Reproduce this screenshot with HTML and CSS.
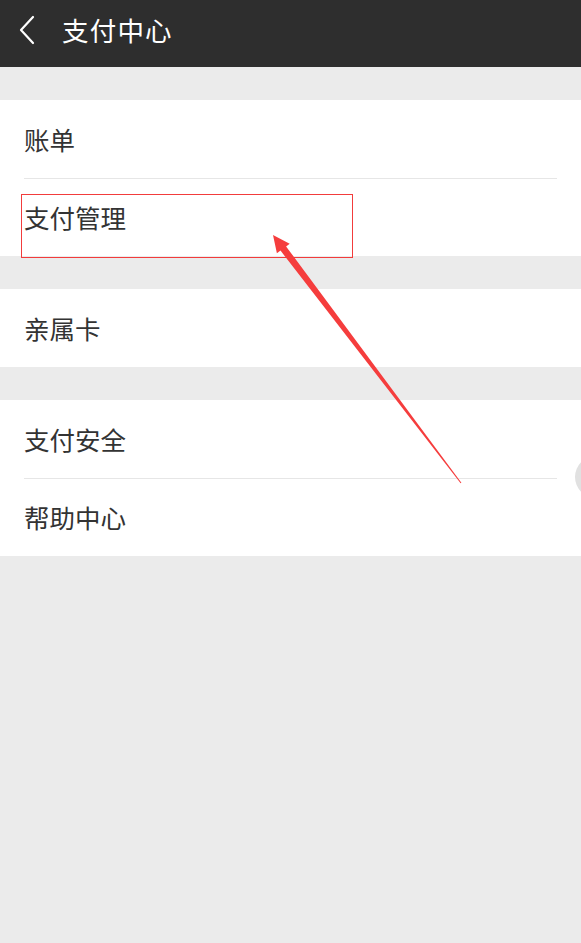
FILE: index.html
```html
<!DOCTYPE html>
<html lang="zh-CN">
<head>
<meta charset="utf-8">
<title>支付中心</title>
<link rel="stylesheet" href="styles.css">
</head>
<body>
<div class="page">
  <header class="topbar">
    <svg class="back" width="20" height="30" viewBox="0 0 20 30">
      <polyline points="15,2 3,15 15,28" fill="none" stroke="#ffffff" stroke-width="2.2" stroke-linecap="round" stroke-linejoin="round"/>
    </svg>
    <h1 class="title">支付中心</h1>
  </header>
  <main class="content">
    <section class="group">
      <div class="row">账单</div>
      <div class="row">支付管理</div>
    </section>
    <section class="group">
      <div class="row">亲属卡</div>
    </section>
    <section class="group">
      <div class="row">支付安全</div>
      <div class="row">帮助中心</div>
    </section>
  </main>
  <svg class="annot" width="581" height="943" viewBox="0 0 581 943">
    <circle cx="596" cy="477" r="21" fill="#e1e1e1"/>
    <rect x="21.5" y="194.5" width="331" height="63" fill="none" stroke="#f23c3c" stroke-width="1"/>
    <polygon points="273,235 289.7,243.7 286.1,246.4 461.4,482.7 460.6,483.3 280.5,250.6 276.9,253.3" fill="#f53d3d"/>
  </svg>
</div>
</body>
</html>
```
FILE: styles.css
```css
html, body {
  margin: 0;
  padding: 0;
  background: #ebebeb;
}
body {
  font-family: "Noto Sans CJK SC", "Noto Sans", sans-serif;
  overflow: hidden;
}
.page {
  position: relative;
  width: 581px;
  height: 943px;
  background: #ebebeb;
}
.topbar {
  box-sizing: border-box;
  height: 67px;
  background: #2e2e2e;
  display: flex;
  align-items: center;
  padding: 0 0 7px 18px;
}
.back {
  display: block;
  flex: none;
}
.title {
  margin: 0 0 0 24px;
  font-size: 26.5px;
  font-weight: normal;
  color: #ffffff;
  letter-spacing: 1.2px;
  line-height: 1;
}
.content {
  display: flex;
  flex-direction: column;
  gap: 33px;
  padding-top: 33px;
}
.group {
  background: #ffffff;
  display: flex;
  flex-direction: column;
}
.row {
  box-sizing: border-box;
  height: 78px;
  margin: 0 24px;
  display: flex;
  align-items: center;
  padding-bottom: 1px;
  font-size: 25.5px;
  color: #333333;
  line-height: 1;
}
.row + .row {
  border-top: 1px solid #e6e6e6;
}
.annot {
  position: absolute;
  left: 0;
  top: 0;
  pointer-events: none;
}
```
